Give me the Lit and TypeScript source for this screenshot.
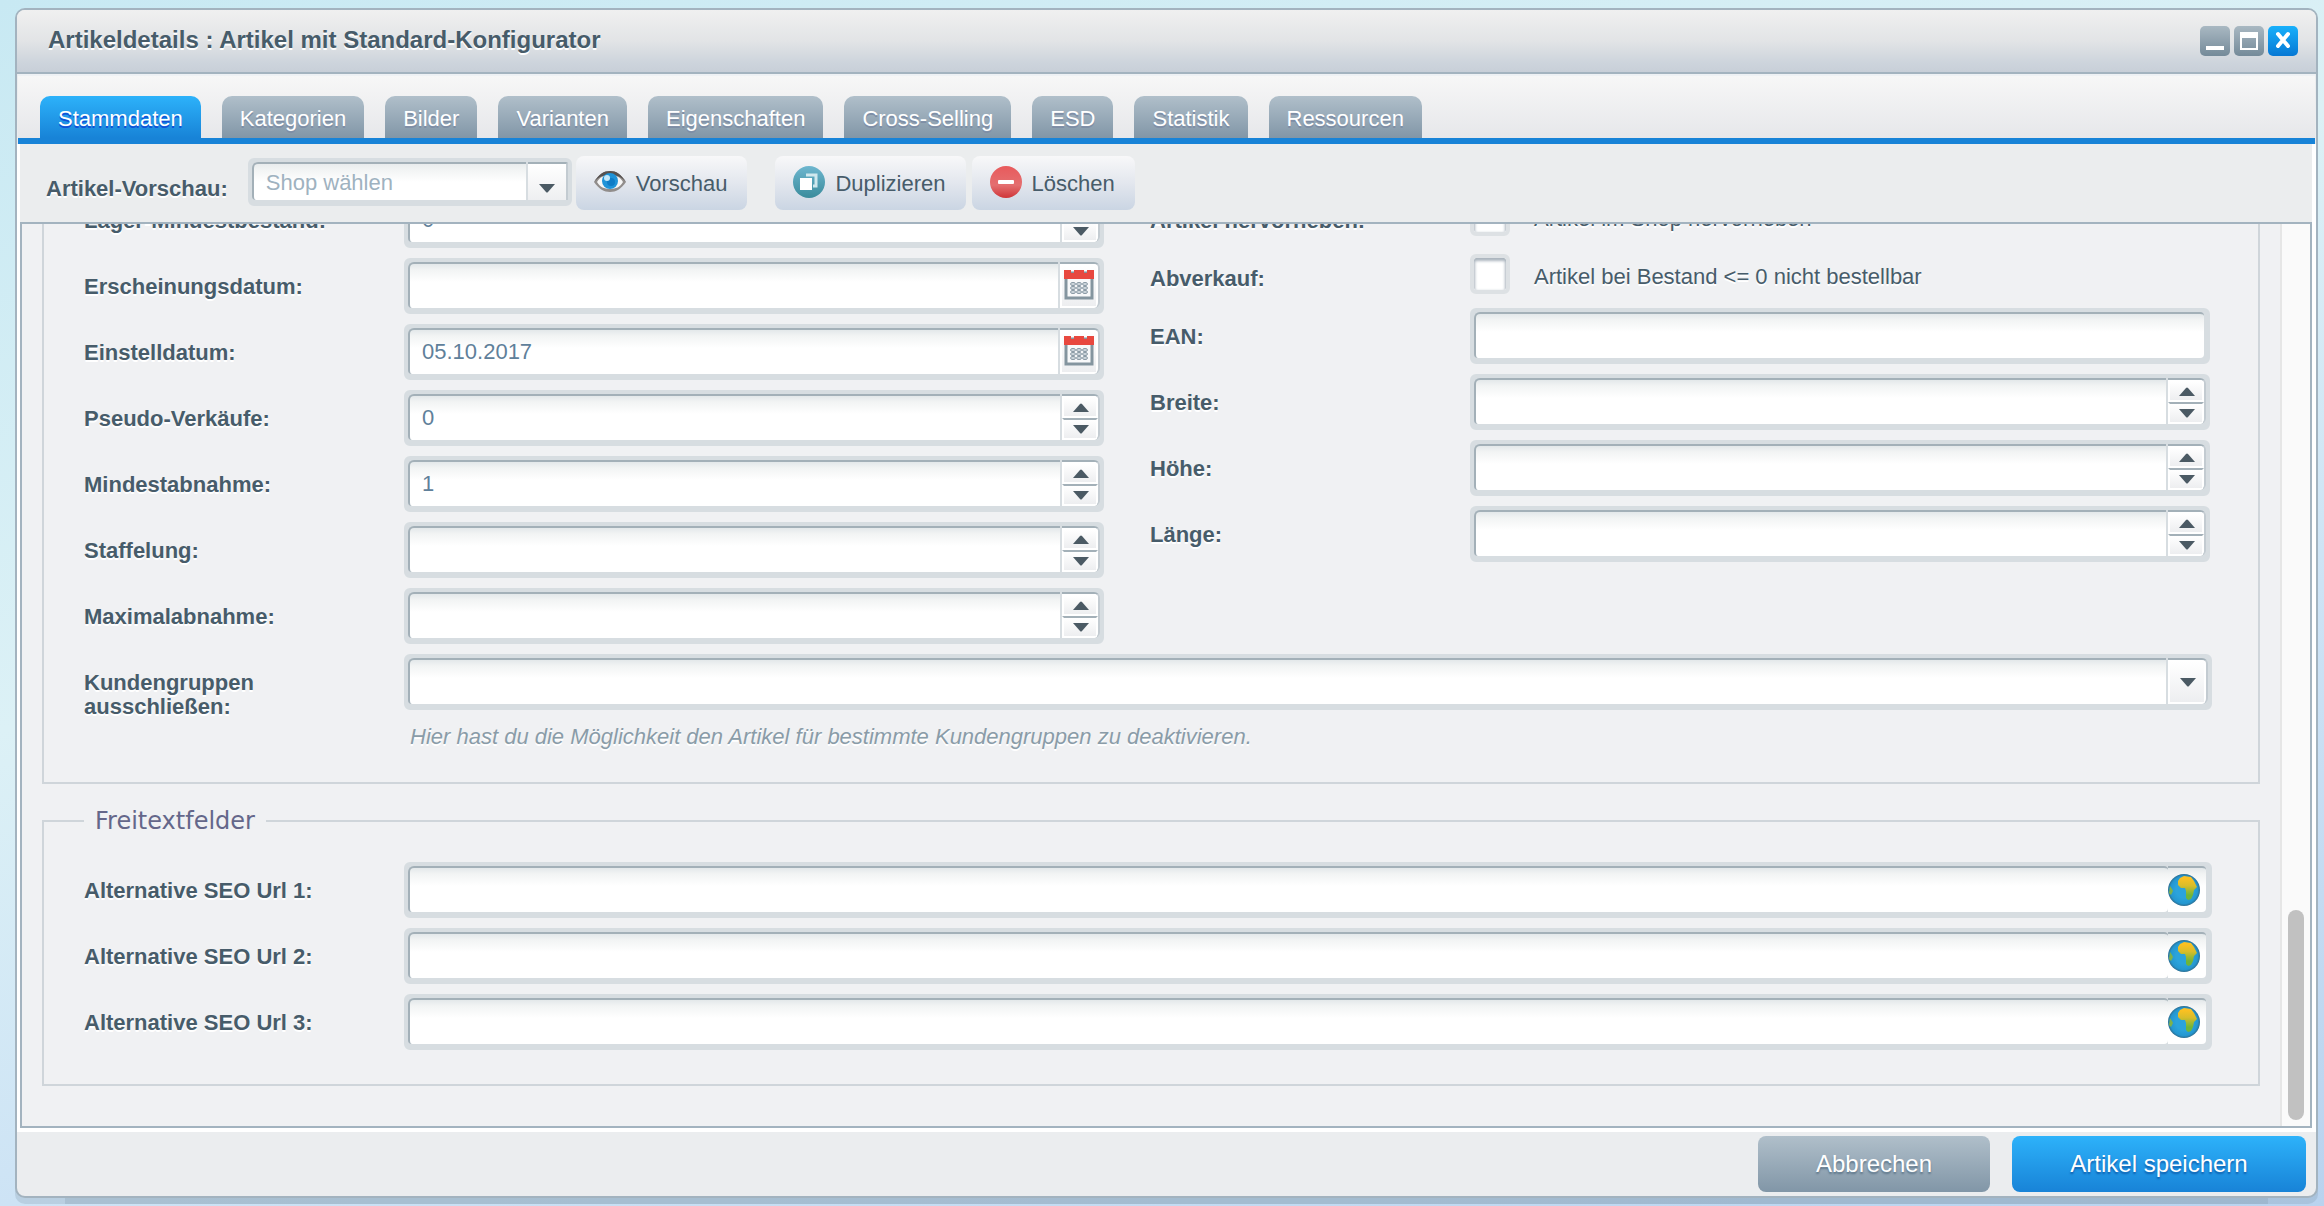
import { LitElement, html, css, svg, nothing } from "lit";
import { customElement, property } from "lit/decorators.js";

const eyeIcon = html`<svg class="icon" viewBox="0 0 32 32" aria-hidden="true">
  <path d="M0 16C5 8 10 5 16 5s11 3 16 11c-5 7-10 10-16 10S5 23 0 16z" fill="#918d8b" />
  <path d="M3 16c3-5 7-7 13-7s10 2 13 7c-3 5-7 7-13 7S6 21 3 16z" fill="#f6f6f6" />
  <path d="M0 16C5 8 10 5 16 5s11 3 16 11C27 10 22 9 16 9S5 10 0 16z" fill="#575250" />
  <circle cx="16" cy="15" r="8" fill="#1f93d8" />
  <circle cx="17" cy="16" r="4" fill="#0f7cc6" />
  <circle cx="13" cy="12" r="3" fill="#c4e8fa" />
</svg>`;

const copyIcon = html`<svg class="icon" viewBox="0 0 32 32" aria-hidden="true">
  <defs>
    <linearGradient id="c" x2="0" y2="1">
      <stop offset="0" stop-color="#6db6cf" />
      <stop offset="1" stop-color="#3b8c9c" />
    </linearGradient>
  </defs>
  <circle cx="16" cy="16" r="16" fill="url(#c)" />
  <path d="M13 9h10v11h-3" fill="none" stroke="#cfe8ee" stroke-width="3" />
  <path d="M7 12h12v12H7z" fill="#fff" />
</svg>`;

const deleteIcon = html`<svg class="icon" viewBox="0 0 32 32" aria-hidden="true">
  <defs>
    <linearGradient id="d" x2="0" y2="1">
      <stop offset="0" stop-color="#e85a5c" />
      <stop offset="0.6" stop-color="#e46f70" />
      <stop offset="1" stop-color="#cf3538" />
    </linearGradient>
  </defs>
  <circle cx="16" cy="16" r="16" fill="url(#d)" />
  <rect x="8" y="14" width="16" height="4" rx="1" fill="#fff" />
</svg>`;

const globeIcon = html`<svg class="globe" viewBox="0 0 32 32" aria-hidden="true">
  <defs>
    <linearGradient id="g" x2="0" y2="1">
      <stop offset="0.1" stop-color="#fbc021" />
      <stop offset="0.4" stop-color="#d9bd2a" />
      <stop offset="0.8" stop-color="#6fb53a" />
    </linearGradient>
    <radialGradient id="s">
      <stop offset="0.5" stop-color="#2ba3dc" />
      <stop offset="0.85" stop-color="#2497d0" />
      <stop offset="1" stop-color="#2c6f93" />
    </radialGradient>
  </defs>
  <circle cx="16" cy="16" r="16" fill="url(#s)" />
  <path d="M12 4l4-2 7 1 3 4 3 6-3 3-1 5-2 4-3 1-2-2v-7l-1-3h-4l-3-3v-4z" fill="url(#g)" />
  <path d="M2 12l2 3 1 2-2 4-2-2z" fill="#7fb24a" />
</svg>`;

const calendarIcon = html`<svg class="calendar" viewBox="0 0 32 34" aria-hidden="true">
  <path d="M3 4h26v25H3z" fill="#f8f9fa" stroke="#84959f" stroke-width="3" />
  <path d="M1 1h7v3h3V1h10v3h3V1h7v9H1z" fill="#e8483f" />
  ${[0, 1, 2].map((x) => [0, 1, 2].map((y) => svg`<ellipse cx=${10 + x * 6} cy=${15 + y * 4} rx="2.5" ry="1.6" fill="#cbd4da" stroke="#8c9ca7" />`))}
</svg>`;

const arrow = (up: boolean) => html`<svg class="arrow" viewBox="0 0 16 9" aria-hidden="true">
  <path d=${up ? "M0 9L7 1q1-1 2 0l7 8z" : "M0 0h16L9 8q-1 1-2 0z"} fill="#4b5a64" />
</svg>`;

type Kind = "text" | "number" | "date" | "select" | "globe";

@customElement("form-field")
class FormField extends LitElement {
  @property() label = "";
  @property() kind: Kind = "text";
  @property() value = "";
  @property() help = "";

  static styles = css`
    :host { display: flex; margin-bottom: 10px; }
    * { box-sizing: border-box; }
    .label {
      flex: 0 0 320px; height: 56px; padding: 17px 60px 0 0;
      font-weight: bold; line-height: 24px; text-shadow: 0 2px 0 #fff;
    }
    .main { flex: 1; min-width: 0; }
    .frame {
      display: flex; height: 56px; overflow: hidden;
      border: 4px solid #d7dde1; border-bottom-width: 6px; border-radius: 6px;
      background: #d7dde1;
    }
    .frame.plain { border-right-width: 6px; }
    .input {
      flex: 1; min-width: 0; height: 46px; padding: 0 12px; margin: 0;
      border: 0 solid #a3b0b8; border-width: 2px 0 0 2px; border-radius: 6px 0 0 4px;
      background: linear-gradient(#e3e8ea, #f2f4f4 6px, #fff 18px);
      font: inherit; color: #5f809a; appearance: none; outline: none;
    }
    .plain .input { border-radius: 6px 4px 4px 4px; }
    .triggers {
      display: flex; flex-direction: column; flex: 0 0 40px; height: 46px;
      border: 0 solid #a3b0b8; border-width: 2px 0 0; margin-left: 2px;
      border-right: 2px solid #c3cbd1; border-radius: 0 6px 6px 0; overflow: hidden;
      background: #fff;
    }
    .triggers.spin { flex-basis: 38px; }
    .trigger {
      flex: 1; display: flex; align-items: center; justify-content: center;
      padding: 0 0 0 2px; border: 2px solid #fff; background: linear-gradient(#fff, #edeef0);
    }
    .date .trigger { padding: 0; }
    .trigger + .trigger { border-top: 2px solid #a3b0b8; }
    .arrow { flex: none; width: 16px; height: 9px; }
    .calendar { flex: none; width: 32px; height: 34px; }
    .globe { flex: none; width: 32px; height: 32px; margin: 6px 6px 0 0; }
    .white {
      display: flex; flex: 0 0 38px; height: 46px; border-top: 2px solid #a3b0b8; border-radius: 0 4px 4px 0;
      background: linear-gradient(#e3e8ea, #f2f4f4 6px, #fff 18px);
    }
    .help {
      margin: 14px 0 0; padding-left: 6px; line-height: 26px; font-style: italic;
      color: #8a9ca8; text-shadow: 0 2px 0 #fff;
    }
  `;

  private renderTriggers() {
    switch (this.kind) {
      case "number":
        return html`<div class="triggers spin">
          <button class="trigger" type="button" aria-label="Erhöhen">${arrow(true)}</button>
          <button class="trigger" type="button" aria-label="Verringern">${arrow(false)}</button>
        </div>`;
      case "date":
        return html`<div class="triggers date">
          <button class="trigger" type="button" aria-label="Kalender">${calendarIcon}</button>
        </div>`;
      case "select":
        return html`<div class="triggers"><span class="trigger">${arrow(false)}</span></div>`;
      case "globe":
        return html`<div class="white">${globeIcon}</div>`;
      default:
        return nothing;
    }
  }

  render() {
    const plain = this.kind === "text" || this.kind === "globe";
    return html`
      <label class="label" for="f">${this.label}</label>
      <div class="main">
        <div class="frame ${plain ? "plain" : ""}">
          ${this.kind === "select"
            ? html`<select class="input" id="f"><option></option></select>`
            : html`<input class="input" id="f" type="text" .value=${this.value} />`}
          ${this.renderTriggers()}
        </div>
        ${this.help ? html`<p class="help">${this.help}</p>` : nothing}
      </div>
    `;
  }
}

@customElement("check-field")
class CheckField extends LitElement {
  @property() label = "";
  @property() text = "";

  static styles = css`
    :host { display: flex; height: 58px; }
    * { box-sizing: border-box; }
    .label {
      flex: 0 0 320px; padding-top: 17px;
      font-weight: bold; line-height: 24px; text-shadow: 0 2px 0 #fff;
    }
    .box {
      width: 40px; height: 40px; margin: 4px 24px 0 0; appearance: none;
      border: 4px solid #dde1e4; border-radius: 6px;
      background: #fff; box-shadow: inset 0 2px 3px 1px #aab4bd;
    }
    .text { padding-top: 15px; line-height: 24px; text-shadow: 0 2px 0 #fff; }
  `;

  render() {
    return html`
      <label class="label" for="c">${this.label}</label>
      <input class="box" id="c" type="checkbox" />
      <label class="text" for="c">${this.text}</label>
    `;
  }
}

const tabs = ["Stammdaten", "Kategorien", "Bilder", "Varianten", "Eigenschaften", "Cross-Selling", "ESD", "Statistik", "Ressourcen"];

@customElement("app-root")
class AppRoot extends LitElement {
  static styles = css`
    :host {
      display: block; height: 100vh; padding: 8px 6px 8px 15px; box-sizing: border-box; overflow: hidden;
      font: 22px "Liberation Sans", Arial, sans-serif; color: #475c6a;
      background: linear-gradient(165deg, #c8e9f3, #dcf1f6 40%, #cde3f5 66%, #b9d3ef);
    }
    * { box-sizing: border-box; }
    button { font: inherit; border: 0; margin: 0; }
    .window {
      display: flex; flex-direction: column; height: 100%;
      border: 2px solid #a3b3bf; border-radius: 10px; background: #ebedef;
      box-shadow: 0 6px 0 rgba(120, 145, 165, 0.24), 0 56px 0 -50px rgba(120, 145, 165, 0.24); overflow: hidden;
    }
    .titlebar {
      display: flex; flex: none; align-items: center; justify-content: space-between;
      height: 64px; padding: 0 18px 0 31px; border-bottom: 2px solid #a3b3bf;
      background: linear-gradient(#f0f0f0, #e2e4e6 50%, #cdd4dc 85%, #c8cfd8);
    }
    .title { margin: 0; padding-bottom: 2px; font-size: 24px; line-height: 28px; text-shadow: 0 2px 0 #fff; }
    .tools { display: flex; gap: 4px; }
    .tool {
      width: 30px; height: 30px; padding: 0; border-radius: 5px;
      background: linear-gradient(#a9b8c2, #748a99);
    }
    .tool.close { background: linear-gradient(#18b0fb, #0678d4); }
    .tool svg { display: block; width: 30px; height: 30px; }
    .tabs {
      display: flex; flex: none; align-items: flex-end; gap: 21px; height: 70px; padding-left: 22px;
      margin: 0 1px; border-top: 2px solid #eef1f4; border-bottom: 6px solid #1883d7;
      background: linear-gradient(#f7f7f7, #e6e7ea);
    }
    .tab {
      height: 42px; padding: 4px 18px 0; border-radius: 10px 10px 0 0; color: #fff;
      text-shadow: 0 2px 0 #7e8ea6; background: linear-gradient(#b0bfca, #8196a7);
    }
    .tab.active { text-shadow: 0 2px 0 #0f50d8; background: linear-gradient(#2db2fa, #1883d7); }
    .body {
      flex: 1; min-height: 0; display: flex; flex-direction: column; padding: 0 4px 4px 3px; background: #fff;
    }
    .toolbar {
      display: flex; flex: none; align-items: center; height: 78px; padding-left: 26px; background: #ebedee;
    }
    .preview { margin-right: 20px; padding-top: 12px; font-weight: bold; text-shadow: 0 2px 0 #fff; }
    .combo {
      display: flex; width: 324px; height: 48px; margin: -2px 4px 0 0; overflow: hidden;
      border: 4px solid #d7dde1; border-bottom-width: 6px; border-radius: 6px; background: #d7dde1;
    }
    .combo-input {
      flex: 1; min-width: 0; padding: 0 12px; appearance: none;
      border: 0 solid #a3b0b8; border-width: 2px 0 0 2px; border-radius: 6px 0 0 4px;
      background: linear-gradient(#e9eced, #f2f4f4 6px, #fff 18px); font: inherit; color: #9fb2c0;
    }
    .combo-arrow {
      display: flex; align-items: center; justify-content: center; width: 40px; height: 40px;
      margin-left: 2px; padding-top: 10px; border-top: 2px solid #a3b0b8; border-right: 2px solid #c3cbd1;
      background: linear-gradient(#fff, #edeef0);
    }
    .arrow { width: 16px; height: 9px; }
    .action {
      display: flex; align-items: center; gap: 10px; height: 54px; margin-right: 6px;
      padding: 2px 20px 0 18px; border-radius: 8px; color: #475c6a;
      background: linear-gradient(#f8f8f9, #e3e7ee 50%, #cad5e3);
    }
    .action .icon { width: 32px; height: 32px; margin-bottom: 4px; }
    .action.spaced { margin-right: 28px; }
    .panel {
      flex: 1; min-height: 0; display: flex; overflow: hidden;
      border: 2px solid #a3b3bf; background: #f0f1f3;
    }
    .content {
      flex: 1; min-width: 0; display: flex; flex-direction: column; justify-content: flex-end;
      padding: 0 20px 40px;
    }
    .group { flex: none; margin: 0; border: 2px solid #cfd5da; min-width: 0; padding: 40px 46px 22px 40px; }
    .group.main { margin-bottom: 23px; }
    .group.free { padding: 27px 46px 24px 40px; }
    .legend { padding: 0 11px; font: 24px/28px "DejaVu Sans", Verdana, sans-serif; color: #64678a; }
    .columns { display: grid; grid-template-columns: 1020fr 1062fr; gap: 46px; }
    .right { padding-right: 2px; }
    .scrollbar {
      flex: none; display: flex; flex-direction: column; justify-content: flex-end; width: 30px; padding: 0 6px 6px;
      border-left: 2px solid #e6e6e6; background: #fafafa;
    }
    .thumb { height: 210px; border-radius: 8px; background: #c1c1c1; }
    .footer {
      display: flex; flex: none; justify-content: flex-end; gap: 22px; height: 64px; padding: 4px 10px;
    }
    .big { width: 232px; height: 56px; border-radius: 8px; font-size: 24px; color: #fff; text-shadow: 0 2px 2px #5b7488; background: linear-gradient(#b0bfca, #8196a7); }
    .big.save { width: 294px; text-shadow: 0 2px 2px #0d5cab; background: linear-gradient(#2db2fa, #1883d7); }
  `;

  render() {
    return html`
      <section class="window">
        <header class="titlebar">
          <h1 class="title">Artikeldetails : Artikel mit Standard-Konfigurator</h1>
          <div class="tools">
            <button class="tool" aria-label="Minimieren"><svg viewBox="0 0 30 30"><path d="M6 20h18v4H6z" fill="#fff" /></svg></button>
            <button class="tool" aria-label="Maximieren"><svg viewBox="0 0 30 30"><path d="M6 6h18v18H6zM8 12v10h14V12z" fill="#fff" fill-rule="evenodd" /></svg></button>
            <button class="tool close" aria-label="Schließen"><svg viewBox="0 0 30 30"><path d="M10 8l10 12M20 8L10 20" stroke="#fff" stroke-width="4" stroke-linecap="round" /></svg></button>
          </div>
        </header>
        <nav class="tabs" role="tablist">
          ${tabs.map((t, i) => html`<button class="tab ${i === 0 ? "active" : ""}" role="tab" aria-selected=${i === 0}>${t}</button>`)}
        </nav>
        <div class="body">
          <div class="toolbar">
            <label class="preview" for="shop">Artikel-Vorschau:</label>
            <div class="combo">
              <select class="combo-input" id="shop"><option>Shop wählen</option></select>
              <span class="combo-arrow">${arrow(false)}</span>
            </div>
            <button class="action spaced">${eyeIcon}Vorschau</button>
            <button class="action">${copyIcon}Duplizieren</button>
            <button class="action">${deleteIcon}Löschen</button>
          </div>
          <div class="panel">
            <div class="content">
              <fieldset class="group main">
                <div class="columns">
                  <div class="left">
                    <form-field label="Lager-Mindestbestand:" kind="number" value="0"></form-field>
                    <form-field label="Erscheinungsdatum:" kind="date"></form-field>
                    <form-field label="Einstelldatum:" kind="date" value="05.10.2017"></form-field>
                    <form-field label="Pseudo-Verkäufe:" kind="number" value="0"></form-field>
                    <form-field label="Mindestabnahme:" kind="number" value="1"></form-field>
                    <form-field label="Staffelung:" kind="number"></form-field>
                    <form-field label="Maximalabnahme:" kind="number"></form-field>
                  </div>
                  <div class="right">
                    <check-field label="Artikel hervorheben:" text="Artikel im Shop hervorheben"></check-field>
                    <check-field label="Abverkauf:" text="Artikel bei Bestand <= 0 nicht bestellbar"></check-field>
                    <form-field label="EAN:"></form-field>
                    <form-field label="Breite:" kind="number"></form-field>
                    <form-field label="Höhe:" kind="number"></form-field>
                    <form-field label="Länge:" kind="number"></form-field>
                  </div>
                </div>
                <form-field
                  label="Kundengruppen ausschließen:"
                  kind="select"
                  help="Hier hast du die Möglichkeit den Artikel für bestimmte Kundengruppen zu deaktivieren."
                ></form-field>
              </fieldset>
              <fieldset class="group free">
                <legend class="legend">Freitextfelder</legend>
                <form-field label="Alternative SEO Url 1:" kind="globe"></form-field>
                <form-field label="Alternative SEO Url 2:" kind="globe"></form-field>
                <form-field label="Alternative SEO Url 3:" kind="globe"></form-field>
              </fieldset>
            </div>
            <div class="scrollbar"><div class="thumb"></div></div>
          </div>
        </div>
        <footer class="footer">
          <button class="big">Abbrechen</button>
          <button class="big save">Artikel speichern</button>
        </footer>
      </section>
    `;
  }
}
